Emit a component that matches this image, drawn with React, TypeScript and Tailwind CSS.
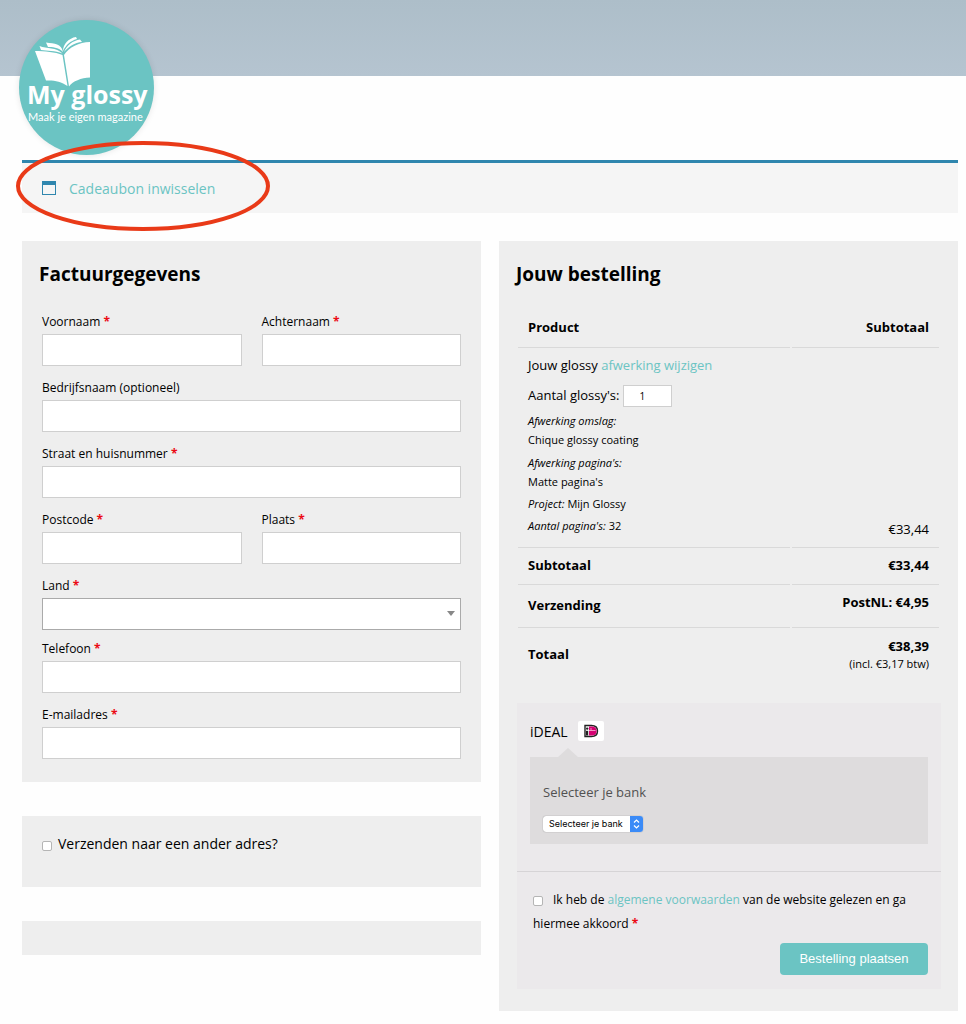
import React from 'react';

type FieldProps = {
    id: string;
    label: string;
    required?: boolean;
    type?: string;
    className?: string;
};

function Required () {
    return <span className="font-bold text-[#eb0a14]">*</span>;
}

function Field ({ id, label, required = true, type = "text", className = "col-span-2" }: FieldProps) {
    return (
        <div className={className}>
            <label htmlFor={id} className="block text-[12px] leading-6">
                {label} {required && <Required />}
            </label>
            <input id={id} type={type} className="block h-8 w-full border border-[#cfcfcf] bg-white px-2 text-[12px]" />
        </div>
    );
}

function Logo () {
    return (
        <a href="#" aria-label="My glossy" className="absolute left-[19px] top-[20px] block size-[135px] rounded-full bg-[#6bc4c3] text-white shadow-[0_0_6px_rgba(0,0,0,0.1)]">
            <svg viewBox="0 0 135 135" className="absolute inset-0 size-full" fill="#fff">
                <path d="M16 31 C26 31 36 32 43.500 35 L48.500 66 C42 61 34 60 27 60.500 Z" />
                <path d="M45 35 C50 27 60 22.500 71 22 L71 57.500 C62 58 54 61 50 66.500 Z" />
                <path d="M20.500 26 C28 29 37 27 43.500 33.500 C36 30.500 28 31 22 30 Z" />
                <path d="M27 22.500 C36 24 42 23 44 32 C39 27 33 27 29 27 Z" />
                <path d="M44 31 C44 24 50 18 57 17 L58 19 C51 21 47 25 44 31 Z" />
                <path d="M45 32 C48 25 54 20.500 61 19.500 L63 22 C56 22.500 49 27 45 32 Z" />
            </svg>
            <span className="absolute left-[8px] top-[59px] whitespace-nowrap text-[25px] font-bold leading-[30px]">My glossy</span>
            <span className="absolute left-[9px] top-[89px] whitespace-nowrap font-[Lato] text-[11px] leading-4">Maak je eigen magazine</span>
        </a>
    );
}

function CouponBar () {
    return (
        <div className="relative flex h-[53px] items-center gap-[13px] border-t-[3px] border-[#2f86ae] bg-[#f5f5f5] pl-5">
            <svg viewBox="0 0 14 14" className="size-[14px]">
                <path d="M0 0h14v14H0z M1 4v9h12V4z" fill="#2f86ae" fillRule="evenodd" />
            </svg>
            <a href="#" className="text-[14px] text-[#6bc4c3]">Cadeaubon inwisselen</a>
            <svg viewBox="0 0 256 92" className="pointer-events-none absolute -left-[7px] -top-[23px] h-[92px] w-[256px]">
                <ellipse cx="128" cy="46" rx="125" ry="43" fill="none" stroke="#e93a18" strokeWidth="4" />
            </svg>
        </div>
    );
}

function BillingForm () {
    return (
        <section className="bg-[#eeeeee] px-[17px] pb-[23px] pt-[18px]">
            <h2 className="text-[19px] font-bold leading-[30px]">Factuurgegevens</h2>
            <div className="mt-[21px] grid grid-cols-2 gap-x-5 gap-y-[10px] px-[3px]">
                <Field id="first-name" label="Voornaam" className="" />
                <Field id="last-name" label="Achternaam" className="" />
                <Field id="company" label="Bedrijfsnaam (optioneel)" required={false} />
                <Field id="street" label="Straat en huisnummer" />
                <Field id="postcode" label="Postcode" className="" />
                <Field id="city" label="Plaats" className="" />
                <div className="relative col-span-2 -mb-[3px]">
                    <label htmlFor="country" className="block text-[12px] leading-6">Land <Required /></label>
                    <select id="country" className="block h-8 w-full appearance-none border border-[#aaaaaa] bg-white px-2 text-[12px]">
                        <option></option>
                    </select>
                    <span className="pointer-events-none absolute bottom-[14px] right-[6px] border-x-[4px] border-t-[5px] border-x-transparent border-t-[#888888]"></span>
                </div>
                <Field id="phone" label="Telefoon" type="tel" />
                <Field id="email" label="E-mailadres" type="email" />
            </div>
        </section>
    );
}

function OrderTable () {
    return (
        <table className="mt-[16px] w-full border-separate border-spacing-x-[2px] border-spacing-y-0 text-[13px] [&_td]:border-[#d9d9d9] [&_td]:px-[10px] [&_th]:border-[#d9d9d9] [&_th]:px-[10px]">
            <thead>
                <tr className="h-[43px]">
                    <th className="w-[65%] border-b pt-1 text-left">Product</th>
                    <th className="border-b pt-1 text-right">Subtotaal</th>
                </tr>
            </thead>
            <tbody>
                <tr>
                    <td className="border-b pb-3 pt-[7px]">
                        <p className="leading-5">Jouw glossy <a href="#" className="text-[#6bc4c3]">afwerking wijzigen</a></p>
                        <div className="mt-[10px] flex items-center gap-1">
                            <label htmlFor="amount">Aantal glossy's:</label>
                            <input id="amount" type="text" defaultValue="1" className="h-[22px] w-[49px] border border-[#cfcfcf] bg-white pl-[15px] text-[10px]" />
                        </div>
                        <dl className="mt-1 text-[11px] leading-[19px]">
                            <dt className="italic">Afwerking omslag:</dt>
                            <dd>Chique glossy coating</dd>
                            <dt className="mt-1 italic">Afwerking pagina's:</dt>
                            <dd>Matte pagina's</dd>
                            <div className="mt-[3px] flex gap-[3px]"><dt className="italic">Project:</dt><dd>Mijn Glossy</dd></div>
                            <div className="mt-[3px] flex gap-[3px]"><dt className="italic">Aantal pagina's:</dt><dd>32</dd></div>
                        </dl>
                    </td>
                    <td className="border-b pb-[8px] text-right align-bottom">€33,44</td>
                </tr>
            </tbody>
            <tfoot>
                <tr className="h-[37px] font-bold">
                    <th className="border-b text-left">Subtotaal</th>
                    <td className="border-b text-right">€33,44</td>
                </tr>
                <tr className="h-[43px] font-bold">
                    <th className="border-b text-left">Verzending</th>
                    <td className="border-b pb-[6px] text-right">PostNL: €4,95</td>
                </tr>
                <tr className="h-[54px] font-bold">
                    <th className="text-left">Totaal</th>
                    <td className="text-right leading-[18px]">
                        €38,39
                        <small className="block text-[11px] font-normal">(incl. €3,17 btw)</small>
                    </td>
                </tr>
            </tfoot>
        </table>
    );
}

function Payment () {
    return (
        <div className="ml-[1px] mt-[21px] bg-[#ebe9eb]">
            <div className="border-b border-[#d6d4d6] px-[13px] pb-[27px] pt-[18px]">
                <div className="flex h-5 items-center gap-[10px] text-[14px]">
                    <span>iDEAL</span>
                    <svg viewBox="0 0 26 20" className="h-5 w-[26px]">
                        <rect width="26" height="20" rx="2" fill="#fff" />
                        <path d="M7 4.500h6.500c4 0 6 2.300 6 5.500s-2 5.500-6 5.500H7z" fill="#fff" stroke="#222" strokeWidth="1.400" />
                        <path d="M11 5.500h3c2.800 0 4.700 1.500 4.700 4.500s-1.900 4.500-4.700 4.500h-3z" fill="#d50072" />
                        <circle cx="9.200" cy="7.600" r="1.200" fill="#222" />
                        <path d="M8 9.800h2.200v4.700H8z" fill="#222" />
                        <path d="M11 9.500h6.500M13 7v2.500" stroke="#f4a6cb" strokeWidth="0.900" />
                    </svg>
                </div>
                <div className="relative mt-4 bg-[#dedcdd] px-[13px] pb-3 pt-[25px]">
                    <span className="absolute -top-[9px] left-[28px] border-x-[10px] border-b-[9px] border-x-transparent border-b-[#dedcdd]"></span>
                    <label htmlFor="bank" className="block text-[13px] leading-5 text-[#515151]">Selecteer je bank</label>
                    <div className="relative mt-[14px] h-4 w-[100px] overflow-hidden rounded-[3px] bg-white shadow-[0_0_1px_rgba(0,0,0,0.5)]">
                        <select id="bank" className="block h-4 w-full appearance-none pl-[6px] font-[Inter] text-[9px] leading-4 text-black">
                            <option>Selecteer je bank</option>
                        </select>
                        <svg viewBox="0 0 13 16" className="pointer-events-none absolute right-0 top-0 h-4 w-[13px]">
                            <rect width="13" height="16" fill="#3b8bf7" />
                            <path d="M4 6.500 6.500 4 9 6.500M4 9.500 6.500 12 9 9.500" fill="none" stroke="#fff" strokeWidth="1.200" />
                        </svg>
                    </div>
                </div>
            </div>
            <div className="px-[13px] pb-[14px] pt-4">
                <label htmlFor="terms" className="block pl-[3px] text-[12px] leading-6">
                    <input id="terms" type="checkbox" className="mr-[10px] size-[10px] appearance-none rounded-[2px] border border-[#b5b5b5] bg-white align-[-2px] checked:bg-[#3b8bf7]" />
                    Ik heb de <a href="#" className="text-[#6bc4c3]">algemene voorwaarden</a> van de website gelezen en ga hiermee akkoord <Required />
                </label>
                <button type="submit" className="ml-auto mt-[7px] block h-8 w-[148px] rounded-[4px] bg-[#6bc4c3] font-['Liberation_Sans'] text-[13px] text-white">Bestelling plaatsen</button>
            </div>
        </div>
    );
}

function App () {
    return (
        <div className="min-h-screen bg-[#fefefe] font-['Open_Sans',sans-serif] text-black">
            <header className="relative z-10 h-[76px] bg-linear-to-b from-[#adbec9] to-[#b5c4d0]">
                <Logo />
            </header>
            <main className="relative z-20 pb-[13px] pl-[22px] pr-2 pt-[84px]">
                <CouponBar />
                <div className="mt-7 grid grid-cols-2 items-start gap-[18px]">
                    <div>
                        <BillingForm />
                        <section className="mt-[34px] h-[71px] bg-[#eeeeee] px-5 pt-[18px]">
                            <label htmlFor="other-address" className="flex items-center gap-[6px] text-[14px] leading-5">
                                <input id="other-address" type="checkbox" className="mt-[3px] size-[10px] appearance-none rounded-[2px] border border-[#b5b5b5] bg-white checked:bg-[#3b8bf7]" />
                                Verzenden naar een ander adres?
                            </label>
                        </section>
                        <section className="mt-[34px] h-[34px] bg-[#eeeeee]"></section>
                    </div>
                    <section className="bg-[#eeeeee] px-[17px] pb-[22px] pt-[18px]">
                        <h2 className="text-[19px] font-bold leading-[30px]">Jouw bestelling</h2>
                        <OrderTable />
                        <Payment />
                    </section>
                </div>
            </main>
        </div>
    );
}

export default App;
